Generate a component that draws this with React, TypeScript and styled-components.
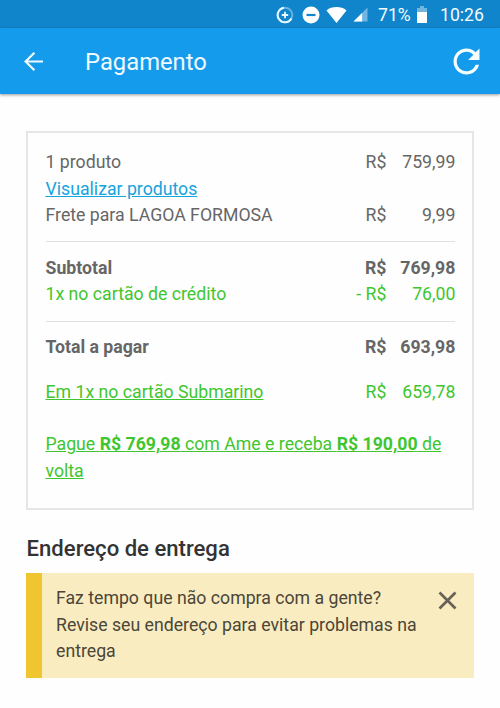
import React, { useState } from 'react';
import styled, { createGlobalStyle } from 'styled-components';

const GlobalStyle = createGlobalStyle`
  * {
    box-sizing: border-box;
  }
  body {
    margin: 0;
    background: #fefefe;
    font-family: Roboto, "Liberation Sans", sans-serif;
  }
  svg {
    display: block;
    flex: none;
  }
`;

const Screen = styled.div`
  width: 500px;
  height: 708px;
  overflow: hidden;
`;

const StatusBar = styled.div`
  display: flex;
  align-items: center;
  justify-content: flex-end;
  height: 28px;
  padding: 1px 18px 0 0;
  background: #1185cb;
  color: #f2fbff;
  font-size: 17.6px;
`;

const StatusIcons = styled.div`
  display: flex;
  align-items: center;
  gap: 6px;
  margin-right: 10px;

  & > :first-child {
    margin-right: 2px;
  }
`;

const BatteryLevel = styled.span`
  width: 31px;
  margin-right: 8px;
  white-space: nowrap;
`;

const Clock = styled.span`
  width: 42px;
  margin-left: 13px;
  white-space: nowrap;
`;

const AppBar = styled.header`
  display: flex;
  align-items: center;
  height: 66px;
  padding: 0 14px 0 23px;
  background: #159bec;
  box-shadow: 0 1px 3px rgba(0, 0, 0, 0.4);
`;

const IconButton = styled.button`
  display: flex;
  padding: 0;
  border: 0;
  background: none;
  cursor: pointer;
`;

const Title = styled.h1`
  flex: 1;
  margin: 2px 0 0 40px;
  color: #eefaff;
  font-size: 23.8px;
  font-weight: 400;
  line-height: 28px;
`;

const Content = styled.main`
  padding: 37px 26px 0;
`;

const Card = styled.section`
  height: 379px;
  padding: 16.4px 16.6px 0 17.5px;
  border: 2px solid #e6e6e6;
`;

const Group = styled.div<{ $top?: number }>`
  padding-top: ${({ $top }) => $top || 0}px;
`;

const Divider = styled.hr`
  height: 1px;
  margin: 12.8px 0 12.6px;
  border: 0;
  background: #e0e0e0;
`;

const Row = styled.div<{ $bold?: boolean; $green?: boolean }>`
  display: flex;
  color: ${({ $green }) => ($green ? '#3fc62f' : '#666')};
  font-size: 17.7px;
  font-weight: ${({ $bold }) => ($bold ? 700 : 400)};
  line-height: 26.4px;
`;

const Label = styled.span`
  flex: 1;
`;

const Amount = styled.span`
  width: 69px;
  text-align: right;
`;

const Link = styled.a<{ $green?: boolean }>`
  color: ${({ $green }) => ($green ? '#3fc62f' : '#16a4dc')};
  font-size: 17.7px;
  line-height: 26.4px;
  text-decoration: underline;
`;

const SectionTitle = styled.h2`
  margin: 24px 0 10px 0.6px;
  color: #333;
  font-size: 22.1px;
  font-weight: 500;
  line-height: 29px;
`;

const Notice = styled.div`
  display: flex;
  align-items: flex-start;
  height: 105px;
  padding: 12.4px 17px 0 14px;
  border-left: 16px solid #f0c630;
  background: #faecc1;
`;

const NoticeText = styled.p`
  flex: 1;
  margin: 0;
  padding-right: 16px;
  color: #4a4638;
  font-size: 17.7px;
  line-height: 26.4px;
`;

const CloseButton = styled(IconButton)`
  margin-top: 6px;
`;

type PriceRowProps = {
  label: React.ReactNode;
  value: string;
  currency?: string;
  bold?: boolean;
  green?: boolean;
};

const PriceRow: React.FC<PriceRowProps> = ({ label, value, currency = 'R$', bold, green }) => (
  <Row $bold={bold} $green={green}>
    <Label>{label}</Label>
    <span>{currency}</span>
    <Amount>{value}</Amount>
  </Row>
);

const DataSaverIcon = () => (
  <svg width="18" height="18" viewBox="0 0 18 18" fill="none" stroke="#e8f8ff" strokeWidth="2">
    <circle cx="9" cy="9" r="7.3" opacity="0.4" />
    <path d="M8 1.8a7.3 7.3 0 1 0 7.4 10.7" />
    <path d="M9 5.8v6.4M5.8 9h6.4" strokeWidth="1.8" />
  </svg>
);

const DoNotDisturbIcon = () => (
  <svg width="18" height="18" viewBox="0 0 18 18">
    <circle cx="9" cy="9" r="8.5" fill="#fff" />
    <rect x="4.5" y="7.9" width="9" height="2.2" fill="#1185cb" />
  </svg>
);

const WifiIcon = () => (
  <svg width="21" height="18" viewBox="0 0 21 18">
    <path d="M.5 4.4C3.3 2 6.7 1 10.5 1s7.2 1 10 3.4L10.5 17z" fill="#fff" />
  </svg>
);

const SignalIcon = () => (
  <svg width="15" height="15" viewBox="0 0 15 15">
    <path d="M.5 14.5l14-14v14z" fill="#fff" opacity="0.4" />
    <path d="M.5 14.5l8.6-8.6v8.6z" fill="#fff" />
  </svg>
);

const BatteryIcon = () => (
  <svg width="10" height="17" viewBox="0 0 10 17">
    <path d="M3 0h4v2h3v4H0V2h3z" fill="#fff" opacity="0.4" />
    <path d="M0 6h10v11H0z" fill="#fff" />
  </svg>
);

const BackIcon = () => (
  <svg width="22" height="22" viewBox="0 0 22 22" fill="none" stroke="#eefaff" strokeWidth="2.2">
    <path d="M20 11.5H2.8M11.4 2.7L2.6 11.5l8.8 8.8" />
  </svg>
);

const RefreshIcon = () => (
  <svg width="39" height="39" viewBox="0 0 24 24" fill="#f4fdff">
    <path d="M17.65 6.35C16.2 4.9 14.21 4 12 4c-4.42 0-7.99 3.58-7.99 8s3.57 8 7.99 8c3.73 0 6.84-2.55 7.73-6h-2.08c-.82 2.33-3.04 4-5.65 4-3.31 0-6-2.69-6-6s2.69-6 6-6c1.66 0 3.14.69 4.22 1.78L13 11h7V4l-2.35 2.35z" />
  </svg>
);

const CloseIcon = () => (
  <svg width="19" height="19" viewBox="0 0 19 19" stroke="#666258" strokeWidth="2.7">
    <path d="M1.5 1.5l16 16M17.5 1.5l-16 16" />
  </svg>
);

const App: React.FC = () => {
  const [showNotice, setShowNotice] = useState(true);

  return (
    <Screen>
      <GlobalStyle />
      <StatusBar>
        <StatusIcons>
          <DataSaverIcon />
          <DoNotDisturbIcon />
          <WifiIcon />
          <SignalIcon />
        </StatusIcons>
        <BatteryLevel>71%</BatteryLevel>
        <BatteryIcon />
        <Clock>10:26</Clock>
      </StatusBar>
      <AppBar>
        <IconButton aria-label="Voltar">
          <BackIcon />
        </IconButton>
        <Title>Pagamento</Title>
        <IconButton aria-label="Atualizar">
          <RefreshIcon />
        </IconButton>
      </AppBar>
      <Content>
        <Card>
          <PriceRow label="1 produto" value="759,99" />
          <Row>
            <Link>Visualizar produtos</Link>
          </Row>
          <PriceRow label="Frete para LAGOA FORMOSA" value="9,99" />
          <Divider />
          <PriceRow label="Subtotal" value="769,98" bold />
          <PriceRow label="1x no cartão de crédito" currency="- R$" value="76,00" green />
          <Divider />
          <PriceRow label="Total a pagar" value="693,98" bold />
          <Group $top={18.6}>
            <PriceRow
              label={<Link $green>Em 1x no cartão Submarino</Link>}
              value="659,78"
              green
            />
          </Group>
          <Group $top={25.8}>
            <Link $green>
              Pague <b>R$ 769,98</b> com Ame e receba <b>R$ 190,00</b> de volta
            </Link>
          </Group>
        </Card>
        <SectionTitle>Endereço de entrega</SectionTitle>
        {showNotice && (
          <Notice>
            <NoticeText>
              Faz tempo que não compra com a gente? Revise seu endereço para evitar problemas na
              entrega
            </NoticeText>
            <CloseButton aria-label="Fechar" onClick={() => setShowNotice(false)}>
              <CloseIcon />
            </CloseButton>
          </Notice>
        )}
      </Content>
    </Screen>
  );
};

export default App;
